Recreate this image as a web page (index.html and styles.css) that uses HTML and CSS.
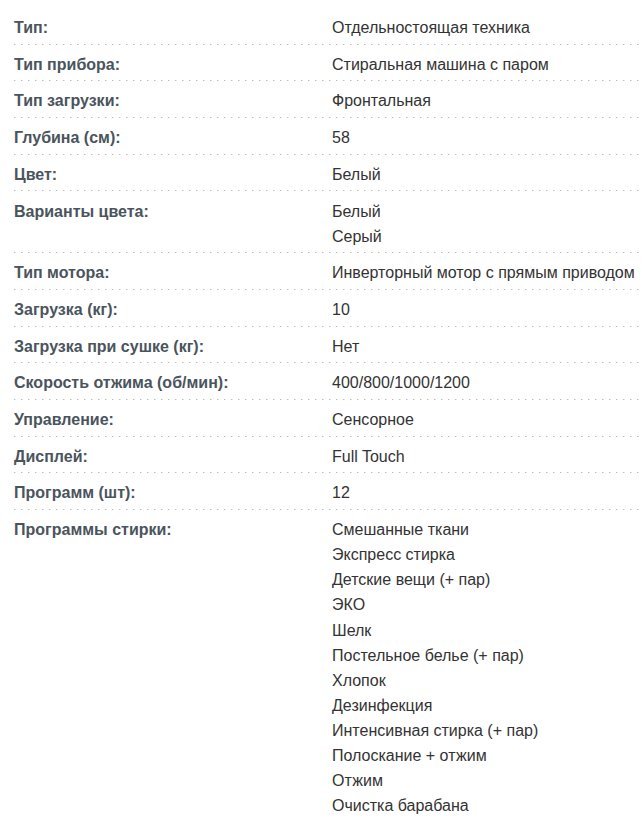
FILE: index.html
```html
<!DOCTYPE html>
<html lang="ru">
<head>
<meta charset="utf-8">
<link rel="stylesheet" href="styles.css">
</head>
<body>
<div class="specs">
  <div class="row"><div class="label">Тип:</div><div class="value">Отдельностоящая техника</div></div>
  <div class="row"><div class="label">Тип прибора:</div><div class="value">Стиральная машина с паром</div></div>
  <div class="row"><div class="label">Тип загрузки:</div><div class="value">Фронтальная</div></div>
  <div class="row"><div class="label">Глубина (см):</div><div class="value">58</div></div>
  <div class="row"><div class="label">Цвет:</div><div class="value">Белый</div></div>
  <div class="row"><div class="label">Варианты цвета:</div><div class="value"><div>Белый</div><div>Серый</div></div></div>
  <div class="row"><div class="label">Тип мотора:</div><div class="value">Инверторный мотор с прямым приводом</div></div>
  <div class="row"><div class="label">Загрузка (кг):</div><div class="value">10</div></div>
  <div class="row"><div class="label">Загрузка при сушке (кг):</div><div class="value">Нет</div></div>
  <div class="row"><div class="label">Скорость отжима (об/мин):</div><div class="value">400/800/1000/1200</div></div>
  <div class="row"><div class="label">Управление:</div><div class="value">Сенсорное</div></div>
  <div class="row"><div class="label">Дисплей:</div><div class="value">Full Touch</div></div>
  <div class="row"><div class="label">Программ (шт):</div><div class="value">12</div></div>
  <div class="row last"><div class="label">Программы стирки:</div><div class="value">
    <div>Смешанные ткани</div>
    <div>Экспресс стирка</div>
    <div>Детские вещи (+ пар)</div>
    <div>ЭКО</div>
    <div>Шелк</div>
    <div>Постельное белье (+ пар)</div>
    <div>Хлопок</div>
    <div>Дезинфекция</div>
    <div>Интенсивная стирка (+ пар)</div>
    <div>Полоскание + отжим</div>
    <div>Отжим</div>
    <div>Очистка барабана</div>
  </div></div>
</div>
</body>
</html>
```
FILE: styles.css
```css
html, body {
  margin: 0;
  padding: 0;
  background: #fff;
}
body {
  font-family: "Liberation Sans", Arial, sans-serif;
  font-size: 16px;
  line-height: 25.1px;
}
.specs {
  padding: 8px 0 0 14px;
}
.row {
  display: grid;
  grid-template-columns: 318px 1fr;
  padding: 7.1px 0 4.5px;
  background-image: repeating-linear-gradient(to right, #b9b9b9 0, #b9b9b9 1px, #e2e2e2 1px, #e2e2e2 2px, transparent 2px, transparent 7px);
  background-size: 100% 1px;
  background-repeat: no-repeat;
  background-position: 0 100%;
}
.row.last {
  background-image: none;
}
.label {
  font-weight: bold;
  color: #4a545d;
}
.value {
  color: #333;
}
```
